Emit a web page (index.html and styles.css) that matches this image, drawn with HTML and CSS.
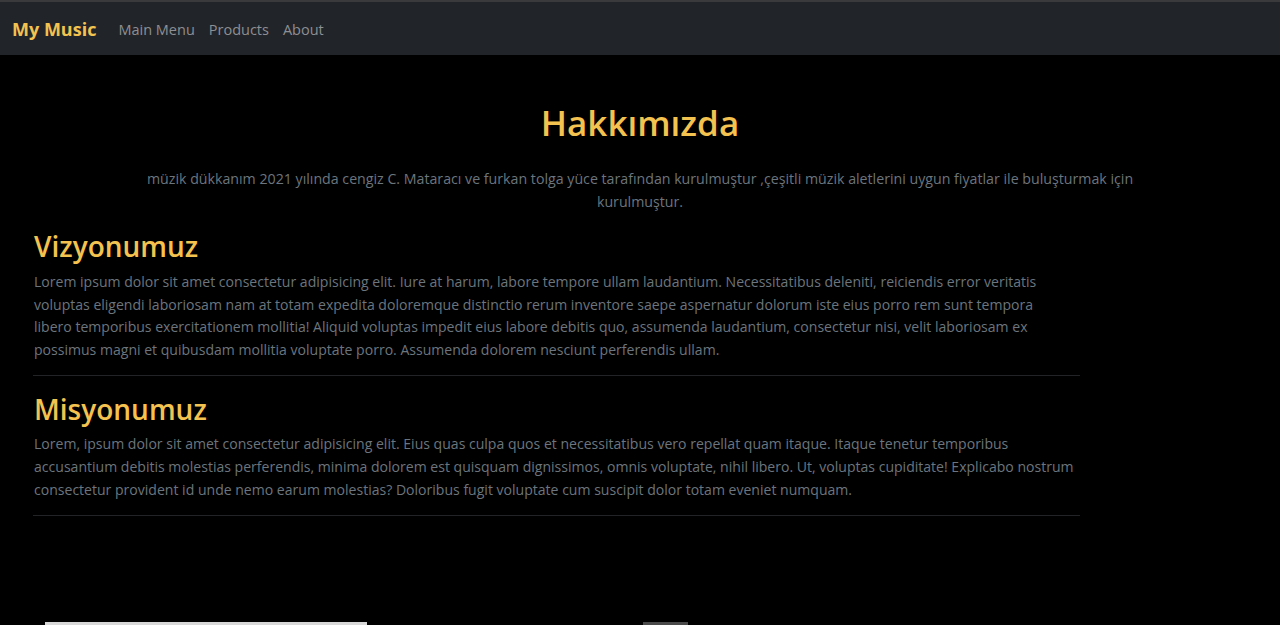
FILE: index.html
```html
<!DOCTYPE html>
<html lang="tr">
<head>
<meta charset="utf-8">
<title>My Music - Hakkımızda</title>
<link rel="stylesheet" href="styles.css">
</head>
<body>
<nav class="navbar">
  <a class="brand" href="#">My Music</a>
  <ul class="nav-links">
    <li><a href="#">Main Menu</a></li>
    <li><a href="#">Products</a></li>
    <li><a href="#">About</a></li>
  </ul>
</nav>
<main class="page">
  <section class="intro">
    <h1 class="title">Hakkımızda</h1>
    <p class="lead">müzik dükkanım 2021 yılında cengiz C. Mataracı ve furkan tolga yüce tarafından kurulmuştur ,çeşitli müzik aletlerini uygun fiyatlar ile buluşturmak için kurulmuştur.</p>
  </section>
  <section class="block">
    <h2 class="block-title">Vizyonumuz</h2>
    <p class="block-text narrow">Lorem ipsum dolor sit amet consectetur adipisicing elit. Iure at harum, labore tempore ullam laudantium. Necessitatibus deleniti, reiciendis error veritatis voluptas eligendi laboriosam nam at totam expedita doloremque distinctio rerum inventore saepe aspernatur dolorum iste eius porro rem sunt tempora libero temporibus exercitationem mollitia! Aliquid voluptas impedit eius labore debitis quo, assumenda laudantium, consectetur nisi, velit laboriosam ex possimus magni et quibusdam mollitia voluptate porro. Assumenda dolorem nesciunt perferendis ullam.</p>
    <hr class="rule">
  </section>
  <section class="block">
    <h2 class="block-title">Misyonumuz</h2>
    <p class="block-text">Lorem, ipsum dolor sit amet consectetur adipisicing elit. Eius quas culpa quos et necessitatibus vero repellat quam itaque. Itaque tenetur temporibus accusantium debitis molestias perferendis, minima dolorem est quisquam dignissimos, omnis voluptate, nihil libero. Ut, voluptas cupiditate! Explicabo nostrum consectetur provident id unde nemo earum molestias? Doloribus fugit voluptate cum suscipit dolor totam eveniet numquam.</p>
    <hr class="rule">
  </section>
</main>
<footer class="bottom-strip">
  <span class="strip-light"></span>
  <span class="strip-gray"></span>
</footer>
</body>
</html>
```

FILE: styles.css
```css
* { box-sizing: border-box; }

html, body {
  margin: 0;
  padding: 0;
  background: #000;
  font-family: "Open Sans", "Noto Sans", sans-serif;
  font-size: 15px;
  color: #6c757d;
}

.navbar {
  display: flex;
  align-items: center;
  height: 55px;
  background: #212429;
  border-top: 2px solid #3a3a3c;
  padding: 0 12px;
}

.brand {
  color: #f3c24f;
  font-size: 18px;
  font-weight: 700;
  text-decoration: none;
  margin-right: 22px;
}

.nav-links {
  display: flex;
  gap: 14px;
  list-style: none;
  margin: 0;
  padding: 0;
}

.nav-links a {
  color: #8e8f92;
  text-decoration: none;
  font-size: 14.5px;
}

.page {
  height: 567px;
}

.intro {
  width: 1060px;
  margin: 0 auto;
  text-align: center;
  padding-top: 47px;
  padding-bottom: 3px;
}

.title {
  margin: 0 0 24px;
  color: #f3c24f;
  font-size: 35px;
  font-weight: 600;
  line-height: 1.2;
}

.lead {
  margin: 0;
  line-height: 22.7px;
  font-size: 14.2px;
}

.block {
  width: 1047px;
  margin-left: 33px;
  padding-left: 1px;
}

.block-title {
  margin: 14px 0 7px;
  color: #f3c24f;
  font-size: 28px;
  font-weight: 600;
  line-height: 1.2;
}

.block-text {
  margin: 0;
  font-size: 14.05px;
  line-height: 22.7px;
}

.block-text.narrow {
  max-width: 1012px;
}

.rule {
  border: 0;
  border-top: 1px solid #222326;
  margin: 13px 0 17px -1px;
}

.bottom-strip {
  display: flex;
  align-items: flex-end;
  height: 3px;
}

.strip-light {
  display: block;
  width: 322px;
  height: 3px;
  margin-left: 45px;
  background: #d8d8d8;
}

.strip-gray {
  display: block;
  width: 45px;
  height: 3px;
  margin-left: 276px;
  background: #4a4a4a;
}
```
